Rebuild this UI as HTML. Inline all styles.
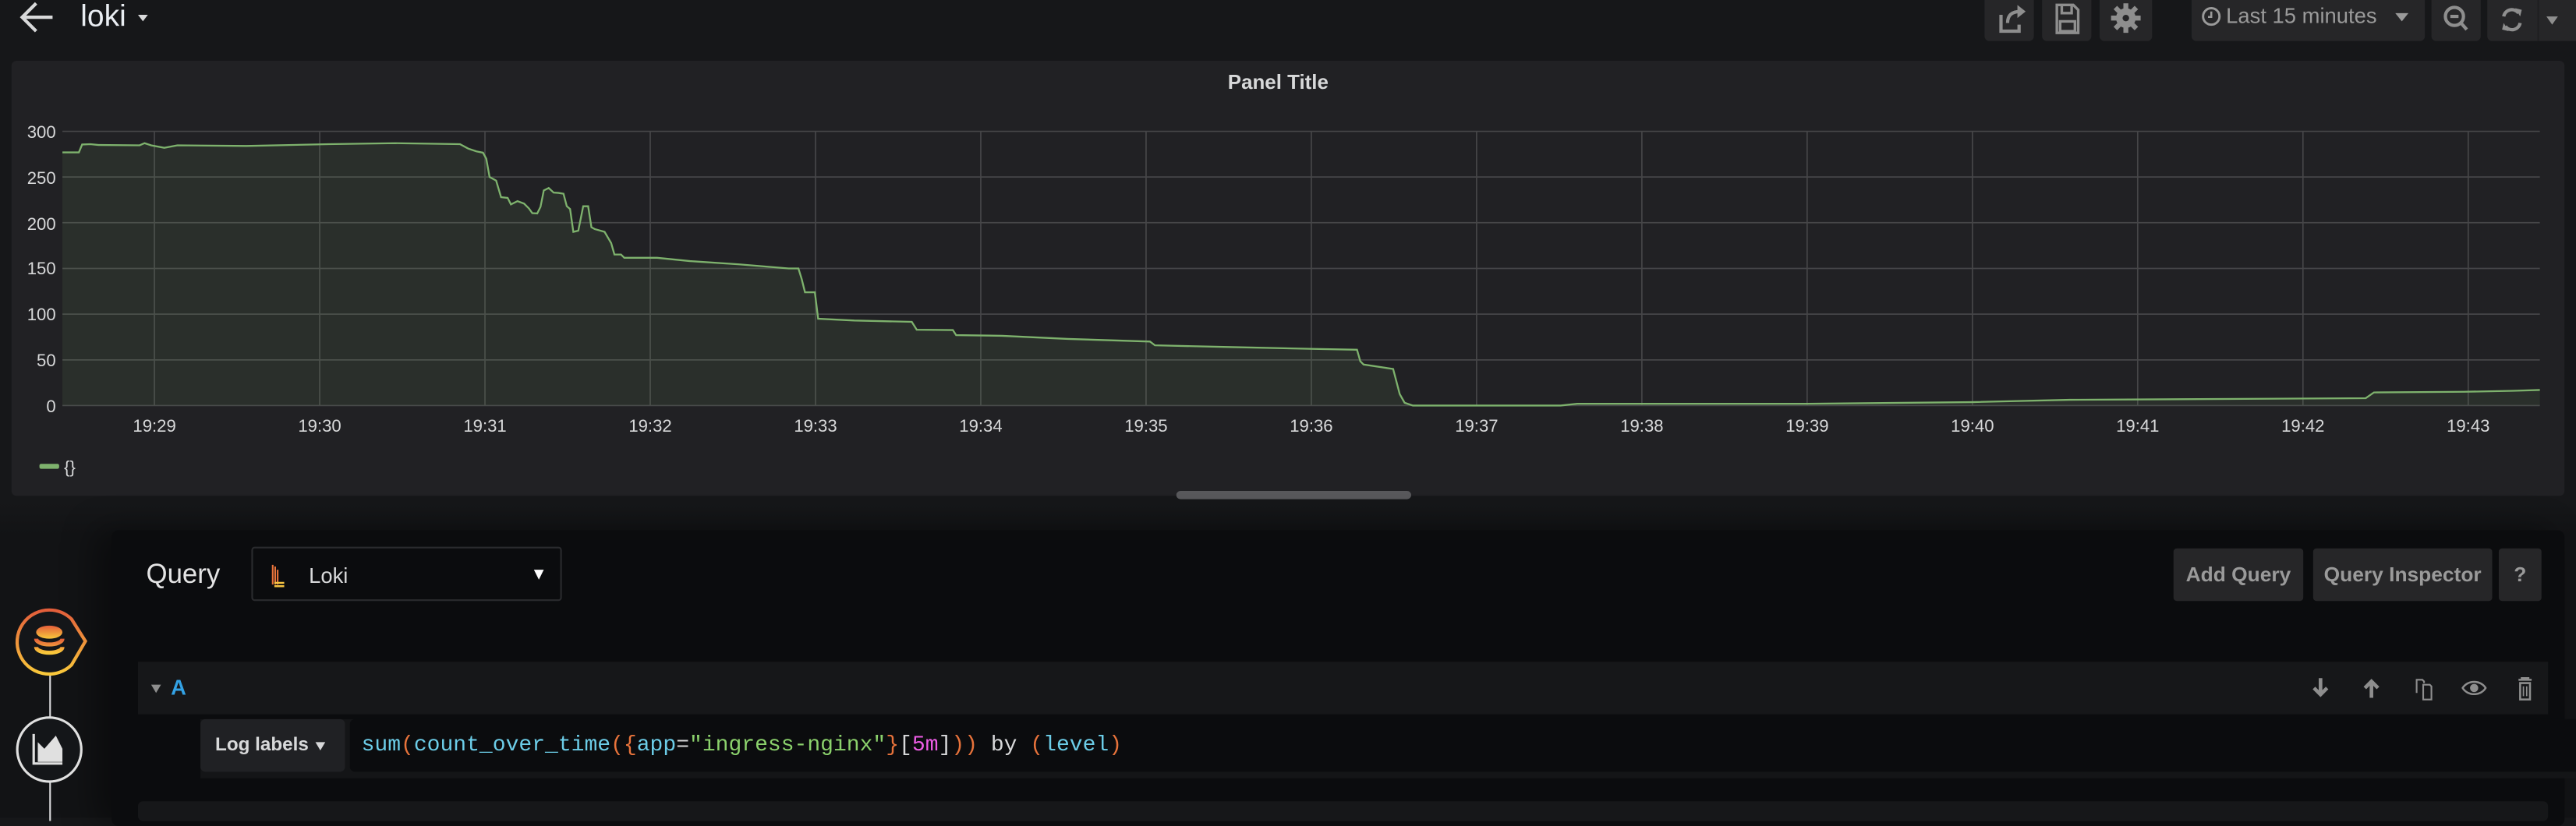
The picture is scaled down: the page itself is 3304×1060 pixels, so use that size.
<!DOCTYPE html>
<html><head><meta charset="utf-8">
<style>
html,body{margin:0;padding:0;background:#161719;width:3304px;height:1048px;overflow:hidden;font-family:"Liberation Sans",sans-serif;}
#s{position:absolute;left:0;top:0;width:1568px;height:497.4px;transform:scale(2.10714);transform-origin:0 0;background:#161719;}
.a{position:absolute}
.btn{position:absolute;background:#262628;border-radius:0 0 3px 3px;top:0;height:25px;overflow:hidden}
.qb{position:absolute;background:#262628;border-radius:2px;color:#9a9a9a;font-weight:bold;font-size:12.5px;line-height:32px;text-align:center;top:334px;height:32px;}
.code{font-family:"Liberation Mono",monospace;font-size:13.3px;}
</style></head><body><div id="s">
<!-- top bar -->
<svg class="a" style="left:10px;top:0" width="26" height="22" viewBox="0 0 26 22"><path d="M22 10.5H4M12 2L3.5 10.5L12 19" stroke="#d8d9da" stroke-width="2" fill="none"/></svg>
<div class="a" style="left:49px;top:-1px;font-size:18.5px;color:#e9edf2;">loki</div>
<div class="a" style="left:84px;top:9px;width:0;height:0;border-left:3px solid transparent;border-right:3px solid transparent;border-top:4px solid #d8d9da"></div>

<div class="btn" style="left:1208px;width:30px"><svg width="30" height="25" viewBox="0 3 30 25"><path d="M10 12v10h11v-4M14 17c0-5 3-7 8-7" stroke="#8e8e8e" stroke-width="2" fill="none"/><path d="M20 6l5 4-5 4z" fill="#8e8e8e"/></svg></div>
<div class="btn" style="left:1243px;width:30px"><svg width="30" height="25" viewBox="0 3 30 25"><path d="M9 6h10l3 3v14H9z M12 6v5h6V6 M11 16h9v6h-9z" stroke="#8e8e8e" stroke-width="1.6" fill="none"/></svg></div>
<div class="btn" style="left:1278px;width:32px"><svg width="32" height="25" viewBox="0 3 32 25"><circle cx="16" cy="14" r="6" fill="#8e8e8e"/><g stroke="#8e8e8e" stroke-width="3"><path d="M16 5v18M7 14h18M9.6 7.6l12.8 12.8M22.4 7.6L9.6 20.4"/></g><circle cx="16" cy="14" r="2" fill="#262628"/></svg></div>
<div class="btn" style="left:1334px;width:142px;color:#9a9a9a;font-size:13px;line-height:20px;">
 <svg class="a" style="left:6px;top:4px" width="12" height="12" viewBox="0 0 12 12"><circle cx="6" cy="6" r="5" stroke="#9a9a9a" stroke-width="1.4" fill="none"/><path d="M6 3v3.3H4" stroke="#9a9a9a" stroke-width="1.2" fill="none"/></svg>
 <span class="a" style="left:21px;top:0">Last 15 minutes</span>
 <div class="a" style="left:124px;top:8px;border-left:4px solid transparent;border-right:4px solid transparent;border-top:5px solid #9a9a9a"></div></div>
<div class="btn" style="left:1480px;width:30px"><svg width="30" height="25" viewBox="0 1 30 25"><circle cx="14" cy="11" r="5.5" stroke="#8e8e8e" stroke-width="2" fill="none"/><path d="M11.5 11h5M18 15l3.5 4" stroke="#8e8e8e" stroke-width="2"/></svg></div>
<div class="btn" style="left:1514px;width:54px;border-radius:0 0 0 3px"><svg width="54" height="25" viewBox="0 1 54 25"><path d="M10 11a5 5 0 0 1 9-2M20 15a5 5 0 0 1-9 2" stroke="#8e8e8e" stroke-width="2" fill="none"/><path d="M17 6l4 1-1 4zM13 20l-4-1 1-4z" fill="#8e8e8e"/><path d="M31 0v33" stroke="#1f1f21"/><path d="M36 11h7l-3.5 5z" fill="#8e8e8e"/></svg></div>

<!-- panel -->
<div class="a" style="left:7px;top:37px;width:1554px;height:265px;background:#212124;border-radius:3px"></div>
<div class="a" style="left:0;top:43px;width:1568px;text-align:center;color:#d8d9da;font-weight:bold;font-size:12.3px;"><span style="position:relative;left:-6px">Panel Title</span></div>
<svg class="a" style="left:0;top:0" width="1568" height="310" viewBox="0 0 1568 310">
<g stroke="#464648" stroke-width="0.8">
<path d="M38 80H1546M38 107.8H1546M38 135.6H1546M38 163.5H1546M38 191.3H1546M38 219.2H1546M38 247H1546"/>
<path d="M94 80V247M194.6 80V247M295.2 80V247M395.8 80V247M496.4 80V247M597 80V247M697.6 80V247M798.2 80V247M898.8 80V247M999.4 80V247M1100 80V247M1200.6 80V247M1301.2 80V247M1401.8 80V247M1502.4 80V247"/>
</g>
<path d="M38 92.8L48 92.8L50 88L55 87.8L60 88.3L85 88.5L88 87.2L92 88.5L100 90L108 88.5L150 88.9L200 87.8L240 87.2L280 87.8L285 90.5L290 92.2L294 93L296 96.7L298 107.8L302 110L305 120.1L309 120.5L311 124.5L315 122.5L319 124L322 127L324 129.8L327 130L329 126L331 116L334 114.5L337 117.3L340 117.5L343 118L345 125.6L347 127.3L349 141.2L352 140.5L355 125.6L358 125.6L360 138.4L362 139.5L368 141.2L372 148L374 155L378 155L380 157L400 157L420 159L450 161L480 163.5L486 163.5L488 170L490 178L496 178L498 194.1L520 195.2L555 196L558 200.8L580 201L582 204.1L610 204.5L650 206.4L700 208L703 210.3L750 211.4L800 212.5L826 213L828 220L830 222L848 224.7L852 240L855 245.3L860 247L950 247L960 245.9L1100 245.9L1200 244.9L1260 243.5L1440 242.5L1445 239L1500 238.6L1530 238L1546 237.5L1546 247L38 247Z" fill="#7eb26d" fill-opacity="0.1"/>
<path d="M38 92.8L48 92.8L50 88L55 87.8L60 88.3L85 88.5L88 87.2L92 88.5L100 90L108 88.5L150 88.9L200 87.8L240 87.2L280 87.8L285 90.5L290 92.2L294 93L296 96.7L298 107.8L302 110L305 120.1L309 120.5L311 124.5L315 122.5L319 124L322 127L324 129.8L327 130L329 126L331 116L334 114.5L337 117.3L340 117.5L343 118L345 125.6L347 127.3L349 141.2L352 140.5L355 125.6L358 125.6L360 138.4L362 139.5L368 141.2L372 148L374 155L378 155L380 157L400 157L420 159L450 161L480 163.5L486 163.5L488 170L490 178L496 178L498 194.1L520 195.2L555 196L558 200.8L580 201L582 204.1L610 204.5L650 206.4L700 208L703 210.3L750 211.4L800 212.5L826 213L828 220L830 222L848 224.7L852 240L855 245.3L860 247L950 247L960 245.9L1100 245.9L1200 244.9L1260 243.5L1440 242.5L1445 239L1500 238.6L1530 238L1546 237.5" fill="none" stroke="#7eb26d" stroke-width="1.1"/>
<g fill="#d8d9da" font-size="10.5" font-family="Liberation Sans,sans-serif" text-anchor="end">
<text x="34" y="84">300</text><text x="34" y="112">250</text><text x="34" y="140">200</text><text x="34" y="167">150</text><text x="34" y="195">100</text><text x="34" y="223">50</text><text x="34" y="251">0</text>
</g>
<g fill="#d8d9da" font-size="10.5" font-family="Liberation Sans,sans-serif" text-anchor="middle">
<text x="94" y="263">19:29</text><text x="194.6" y="263">19:30</text><text x="295.2" y="263">19:31</text><text x="395.8" y="263">19:32</text><text x="496.4" y="263">19:33</text><text x="597" y="263">19:34</text><text x="697.6" y="263">19:35</text><text x="798.2" y="263">19:36</text><text x="898.8" y="263">19:37</text><text x="999.4" y="263">19:38</text><text x="1100" y="263">19:39</text><text x="1200.6" y="263">19:40</text><text x="1301.2" y="263">19:41</text><text x="1401.8" y="263">19:42</text><text x="1502.4" y="263">19:43</text>
</g>
<rect x="24" y="282.5" width="12" height="3" fill="#7eb26d" rx="1"/>
<text x="39" y="288" fill="#d8d9da" font-size="10.5" font-family="Liberation Sans,sans-serif">{}</text>
<rect x="716" y="299" width="143" height="5" rx="2.5" fill="#58585b"/>
</svg>

<!-- query section -->
<div class="a" style="left:0;top:306px;width:1568px;height:192px;background:linear-gradient(#161719,#121315 20px)"></div>
<div class="a" style="left:68px;top:323px;width:1493px;height:180px;background:#0b0c0e;border-radius:4px;box-shadow:-10px 0 20px rgba(0,0,0,0.4)"></div>
<div class="a" style="left:89px;top:341px;color:#e4e4e4;font-size:16.5px">Query</div>
<div class="a" style="left:153px;top:333px;width:187px;height:31px;background:#0b0c0e;border:1px solid #2a2b2e;border-radius:2px"></div>
<svg class="a" style="left:163px;top:343px" width="14" height="16" viewBox="0 0 14 16"><path d="M3 1v12M4.5 2v11M6 4v9" stroke="#e8733b" stroke-width="1"/><path d="M4 12h6M4 14h6" stroke="#f5c342" stroke-width="1.2"/></svg>
<div class="a" style="left:188px;top:343px;color:#d8d9da;font-size:13px">Loki</div>
<div class="a" style="left:325px;top:347px;border-left:3.5px solid transparent;border-right:3.5px solid transparent;border-top:6px solid #fff"></div>

<div class="qb" style="left:1323px;width:79px">Add Query</div>
<div class="qb" style="left:1408px;width:109px">Query Inspector</div>
<div class="qb" style="left:1521px;width:26px">?</div>

<!-- left icons -->
<div class="a" style="left:29.5px;top:410px;width:1.5px;height:90px;background:#d8d9da"></div>
<svg class="a" style="left:8px;top:369px" width="56" height="46" viewBox="0 0 56 46">
<defs><linearGradient id="g" x1="0" y1="0" x2="0" y2="1"><stop offset="0" stop-color="#e35e3b"/><stop offset="1" stop-color="#f9c83b"/></linearGradient></defs>
<path d="M22 2.5a19.5 19.5 0 1 0 13.5 33.5L44 21.5L35.5 8A19.5 19.5 0 0 0 22 2.5Z" fill="#141619" stroke="url(#g)" stroke-width="2"/>
<ellipse cx="22" cy="16" rx="8" ry="4" fill="url(#g)"/>
<path d="M14 20a8 3.5 0 0 0 16 0M14 25a8 3.5 0 0 0 16 0" stroke="url(#g)" stroke-width="2.5" fill="none"/>
</svg>
<svg class="a" style="left:8px;top:434px" width="46" height="46" viewBox="0 0 46 46">
<circle cx="22" cy="22.5" r="19.5" fill="#141619" stroke="#e0e0e0" stroke-width="1.5"/>
<path d="M12.5 13v18h17.5" stroke="#e0e0e0" stroke-width="1.5" fill="none"/>
<path d="M15 30V18l4 4 7-8 4 8v8z" fill="#e0e0e0"/>
</svg>

<!-- row A -->
<div class="a" style="left:84px;top:403px;width:1467px;height:32px;background:#161719"></div>
<div class="a" style="left:92px;top:417px;border-left:3.5px solid transparent;border-right:3.5px solid transparent;border-top:5px solid #8e8e8e"></div>
<div class="a" style="left:104px;top:411px;color:#33a2e5;font-size:13px;font-weight:bold">A</div>
<svg class="a" style="left:1400px;top:409px" width="150" height="20" viewBox="0 0 150 20">
<g fill="#8e8e8e" stroke="#8e8e8e">
<path d="M12.5 4v10M8.5 10l4 4 4-4" stroke-width="2.2" fill="none"/>
<path d="M43.5 16V6M39.5 10l4-4 4 4" stroke-width="2.2" fill="none"/>
<path d="M71 13V5h3.5l1 1v1M75 8h4l1 1v8h-5z" stroke-width="1" fill="none"/>
<path d="M99 10c3-5 11-5 14 0c-3 5-11 5-14 0z" stroke-width="1.2" fill="none"/><circle cx="106" cy="10" r="2.5" stroke="none"/>
<path d="M133 5h8M135 5V4h4v1M134 7h6v10h-6z" stroke-width="1.2" fill="none"/><path d="M136 9v6M138 9v6" stroke-width="0.8"/>
</g></svg>

<div class="a" style="left:122px;top:438px;width:1446px;height:36px;background:#141517"></div>
<div class="a" style="left:122px;top:438px;width:88px;height:32px;background:#202124;border-radius:3px;color:#d8d9da;font-size:11.5px;font-weight:bold;line-height:32px;"><span style="margin-left:9px">Log labels</span></div>
<div class="a" style="left:192px;top:452px;border-left:3.5px solid transparent;border-right:3.5px solid transparent;border-top:5px solid #d8d9da"></div>
<div class="a" style="left:213px;top:438px;width:1355px;height:32px;background:#0b0c0e;border-radius:3px 0 0 3px"></div>
<div class="a code" style="left:220px;top:446px;white-space:pre;color:#d8d9da"><span style="color:#6ccde8">sum</span><span style="color:#e8733b">(</span><span style="color:#6ccde8">count_over_time</span><span style="color:#e8733b">({</span><span style="color:#6ccde8">app</span>=<span style="color:#8bd16c">"ingress-nginx"</span><span style="color:#e8733b">}</span>[<span style="color:#ee5de6">5m</span>]<span style="color:#e8733b">))</span> by <span style="color:#e8733b">(</span><span style="color:#6ccde8">level</span><span style="color:#e8733b">)</span></div>
<div class="a" style="left:84px;top:488px;width:1467px;height:12px;background:#161719;border-radius:3px"></div>
</div></body></html>
